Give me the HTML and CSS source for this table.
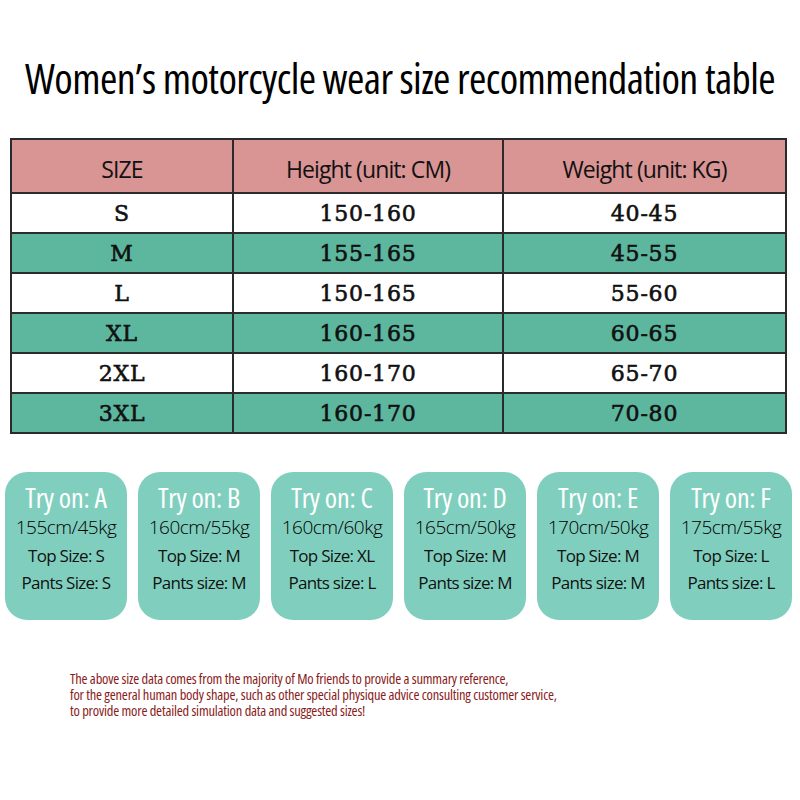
FILE: index.html
```html
<!DOCTYPE html>
<html>
<head>
<meta charset="utf-8">
<link rel="stylesheet" href="styles.css">
</head>
<body>
<div class="page">
  <h1 class="title">Women’s motorcycle wear size recommendation table</h1>
  <table class="sizes">
    <tr class="head"><th class="c1">SIZE</th><th class="c2">Height (unit: CM)</th><th class="c3">Weight (unit: KG)</th></tr>
    <tr class="w"><td>S</td><td>150-160</td><td>40-45</td></tr>
    <tr class="g"><td>M</td><td>155-165</td><td>45-55</td></tr>
    <tr class="w"><td>L</td><td>150-165</td><td>55-60</td></tr>
    <tr class="g"><td>XL</td><td>160-165</td><td>60-65</td></tr>
    <tr class="w"><td>2XL</td><td>160-170</td><td>65-70</td></tr>
    <tr class="g"><td>3XL</td><td>160-170</td><td>70-80</td></tr>
  </table>
  <div class="cards">
    <div class="card"><div class="ct">Try on: A</div><div class="hw">155cm/45kg</div><div class="ln">Top Size: S</div><div class="ln">Pants Size: S</div></div>
    <div class="card"><div class="ct">Try on: B</div><div class="hw">160cm/55kg</div><div class="ln">Top Size: M</div><div class="ln">Pants size: M</div></div>
    <div class="card"><div class="ct">Try on: C</div><div class="hw">160cm/60kg</div><div class="ln">Top Size: XL</div><div class="ln">Pants size: L</div></div>
    <div class="card"><div class="ct">Try on: D</div><div class="hw">165cm/50kg</div><div class="ln">Top Size: M</div><div class="ln">Pants size: M</div></div>
    <div class="card"><div class="ct">Try on: E</div><div class="hw">170cm/50kg</div><div class="ln">Top Size: M</div><div class="ln">Pants size: M</div></div>
    <div class="card"><div class="ct">Try on: F</div><div class="hw">175cm/55kg</div><div class="ln">Top Size: L</div><div class="ln">Pants size: L</div></div>
  </div>
  <p class="note">The above size data comes from the majority of Mo friends to provide a summary reference,<br>for the general human body shape, such as other special physique advice consulting customer service,<br>to provide more detailed simulation data and suggested sizes!</p>
</div>
</body>
</html>
```
FILE: styles.css
```css
html, body {
  margin: 0;
  padding: 0;
  background: #ffffff;
}
.page {
  width: 800px;
  height: 800px;
  overflow: hidden;
  display: flex;
  flex-direction: column;
}
.title {
  margin: 56px 0 0 0;
  text-align: center;
  white-space: nowrap;
  font-family: "Open Sans", sans-serif;
  font-stretch: 80%;
  font-weight: 500;
  font-size: 42px;
  line-height: 44px;
  letter-spacing: -0.6px;
  color: #000;
}
.sizes {
  margin: 38px 0 0 10px;
  width: 777px;
  border-collapse: collapse;
  table-layout: fixed;
}
.sizes th, .sizes td {
  border: 2px solid #2b2b2b;
  text-align: center;
  padding: 0;
}
.sizes .c1 { width: 220px; }
.sizes .c2 { width: 268px; }
.head th {
  background: #d99494;
  height: 46px;
  font-family: "Open Sans", sans-serif;
  font-stretch: 92%;
  font-weight: normal;
  font-size: 23px;
  letter-spacing: -0.9px;
  color: #111;
  padding-top: 6px;
}
.sizes td {
  height: 38px;
  font-family: "DejaVu Serif", serif;
  font-size: 22px;
  font-weight: normal;
  color: #111;
  letter-spacing: 0.8px;
  -webkit-text-stroke: 0.6px #111;
}
.w td { background: #ffffff; }
.g td { background: #5db79f; }
.cards {
  display: flex;
  gap: 11px;
  margin: 38px 0 0 5px;
}
.card {
  width: 122px;
  height: 148px;
  border-radius: 22px;
  background: #80cfbe;
  display: flex;
  flex-direction: column;
  align-items: center;
  padding-top: 10px;
  box-sizing: border-box;
}
.ct {
  font-family: "Open Sans", sans-serif;
  font-stretch: 75%;
  font-weight: 500;
  color: #fff;
  font-size: 28px;
  line-height: 30px;
  letter-spacing: -0.2px;
}
.hw {
  font-family: "Open Sans", sans-serif;
  font-weight: 300;
  font-size: 19px;
  line-height: 30px;
  letter-spacing: -0.5px;
  color: #000;
}
.ln {
  font-family: "Open Sans", sans-serif;
  font-stretch: 92%;
  font-weight: 500;
  font-size: 17px;
  line-height: 27px;
  letter-spacing: -0.7px;
  color: #111;
}
.note {
  margin: 51px 0 0 70px;
  font-family: "Open Sans", sans-serif;
  font-stretch: 80%;
  font-weight: 500;
  font-size: 14.5px;
  line-height: 16px;
  letter-spacing: -0.2px;
  color: #8a1c1c;
}
```
